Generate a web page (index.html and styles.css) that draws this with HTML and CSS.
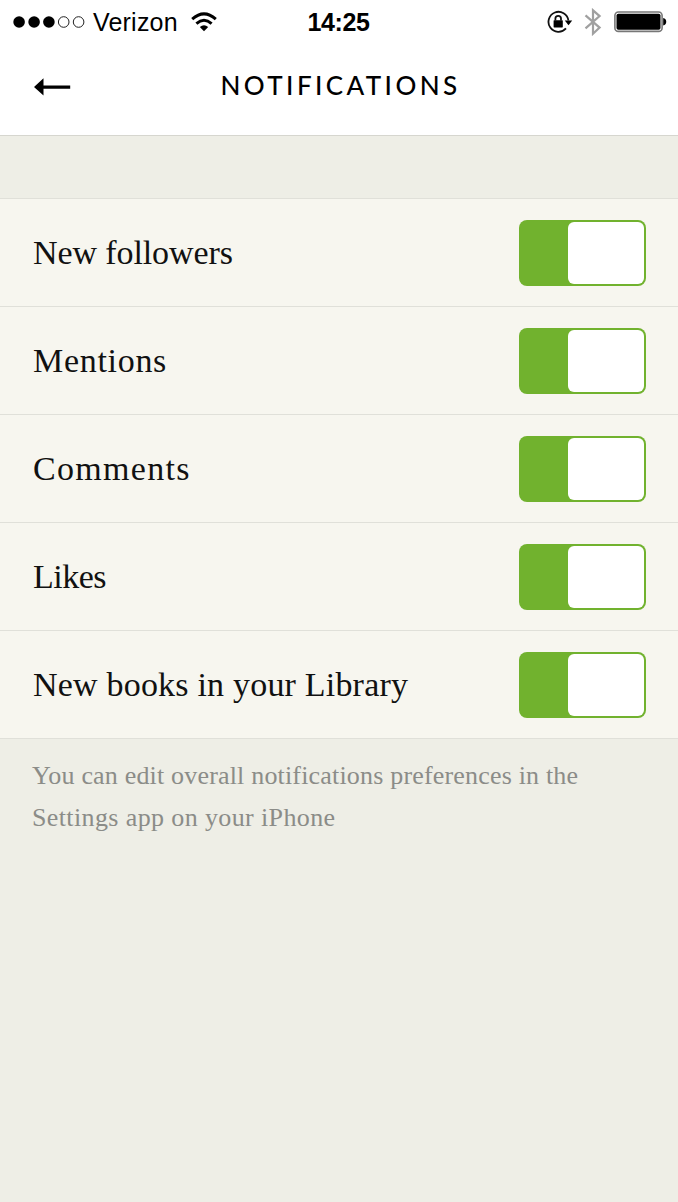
FILE: index.html
```html
<!DOCTYPE html>
<html lang="en">
<head>
    <meta charset="UTF-8">
    <meta name="viewport" content="width=device-width, initial-scale=1.0">
    <title>Notifications</title>
    <link rel="stylesheet" href="styles.css">
</head>
<body>
    <!-- Status bar -->
    <div class="status-bar">
        <div class="status-left">
            <svg class="signal" width="72" height="14" viewBox="0 0 72 14">
                <circle cx="6.1" cy="7" r="5.8" />
                <circle cx="21.1" cy="7" r="5.8" />
                <circle cx="35.9" cy="7" r="5.8" />
                <circle class="empty" cx="50.7" cy="7" r="5.3" />
                <circle class="empty" cx="65.6" cy="7" r="5.3" />
            </svg>
            <span class="carrier">Verizon</span>
            <svg class="wifi" width="26" height="20" viewBox="0 0 26 20">
                <path class="arc" d="M1.2 7.2 Q13 -3.4 24.8 7.2" />
                <path class="arc" d="M5.4 11.6 Q13 5 20.6 11.6" />
                <path d="M8.8 14.9 Q13 11.6 17.2 14.9 L13 19.2 Z" />
            </svg>
        </div>
        <span class="clock">14:25</span>
        <div class="status-right">
            <svg class="lock" width="26" height="24" viewBox="0 0 26 24">
                <path class="ring" d="M21.4 10.5 A10 10 0 1 0 19 18.4" />
                <path d="M17.8 10.5 H25.2 L21.5 15.2 Z" />
                <rect x="6.6" y="10.2" width="9.2" height="7.2" rx="0.6" />
                <path class="shackle" d="M8.4 10.5 V8.6 A2.8 2.8 0 0 1 14 8.6 V10.5" />
            </svg>
            <svg class="bluetooth" width="18" height="28" viewBox="0 0 18 28">
                <path d="M1.5 7.4 L15.6 19.6 L9 25.7 V2.3 L15.6 8.1 L1.5 20.4" />
            </svg>
            <svg class="battery" width="53" height="22" viewBox="0 0 53 22">
                <rect class="case" x="0.9" y="1" width="47.2" height="19.4" rx="3.5" />
                <rect x="2.5" y="2.7" width="44" height="16" rx="1.8" />
                <path d="M49.2 7 Q52.2 7.6 52.2 10.7 Q52.2 13.8 49.2 14.4 Z" />
            </svg>
        </div>
    </div>

    <!-- Navigation -->
    <header class="navbar">
        <svg class="back" width="38" height="20" viewBox="0 0 38 20">
            <path d="M0 11 L9.5 2.3 V9.4 H36.2 V12.7 H9.5 V19.6 Z" />
        </svg>
        <h1 class="title">NOTIFICATIONS</h1>
    </header>

    <!-- Settings -->
    <ul class="settings">
        <li class="row">
            <span class="label followers">New followers</span>
            <span class="toggle"><span class="knob"></span></span>
        </li>
        <li class="row">
            <span class="label mentions">Mentions</span>
            <span class="toggle"><span class="knob"></span></span>
        </li>
        <li class="row">
            <span class="label comments">Comments</span>
            <span class="toggle"><span class="knob"></span></span>
        </li>
        <li class="row">
            <span class="label likes">Likes</span>
            <span class="toggle"><span class="knob"></span></span>
        </li>
        <li class="row">
            <span class="label books">New books in your Library</span>
            <span class="toggle"><span class="knob"></span></span>
        </li>
    </ul>

    <p class="hint">You can edit overall notifications preferences in the<br><span class="hint-end">Settings app on your iPhone</span></p>
</body>
</html>
```
FILE: styles.css
```css
* {
    box-sizing: border-box;
}
body {
    margin: 0;
    min-height: 100vh;
    font-family: "Liberation Serif", serif;
    background-color: #eeeee6;
    color: #111;
}

/* Status bar */
.status-bar {
    display: grid;
    grid-template-columns: 1fr auto 1fr;
    align-items: center;
    height: 43px;
    padding: 0 11px 0 13px;
    background-color: #fff;
    color: #000;
    font-family: "Liberation Sans", sans-serif;
    font-size: 25px;
}
.status-left, .status-right {
    display: flex;
    align-items: center;
}
.status-right {
    justify-content: flex-end;
}
.signal .empty {
    fill: none;
    stroke: #222;
    stroke-width: 1;
}
.carrier {
    margin-left: 8px;
    padding-top: 1px;
    letter-spacing: 0.2px;
}
.wifi {
    margin-left: 13px;
}
.wifi .arc {
    fill: none;
    stroke: #000;
    stroke-width: 3;
}
.clock {
    padding: 1px 3px 0 0;
    font-weight: bold;
    letter-spacing: -0.4px;
}
.lock .ring, .lock .shackle {
    fill: none;
    stroke: #111;
    stroke-width: 1.8;
}
.bluetooth {
    margin-left: 11px;
    fill: none;
    stroke: #a0a0a0;
    stroke-width: 2.2;
}
.battery {
    margin-left: 12px;
}
.battery .case {
    fill: none;
    stroke: #777;
    stroke-width: 1.6;
}

/* Navigation */
.navbar {
    display: grid;
    grid-template-columns: 1fr auto 1fr;
    align-items: center;
    height: 93px;
    padding: 0 34px 6px;
    background-color: #fff;
    border-bottom: 1px solid #d6d6cf;
}
.title {
    margin: 0;
    padding: 0 0 2px 3px;
    color: #000;
    font-family: Lato, sans-serif;
    font-size: 26px;
    font-weight: 500;
    letter-spacing: 3.4px;
}

/* Settings */
.settings {
    margin: 62px 0 0;
    padding: 0;
    list-style: none;
    border-top: 1px solid #e0e0d9;
    background-color: #f7f6ef;
}
.row {
    display: flex;
    align-items: center;
    justify-content: space-between;
    height: 108px;
    padding: 1px 32px 0 33px;
    border-bottom: 1px solid #e0e0d9;
}
.label {
    font-size: 34px;
}
.followers {
    letter-spacing: -0.1px;
}
.mentions {
    letter-spacing: 0.7px;
}
.comments {
    letter-spacing: 1.3px;
}
.likes {
    letter-spacing: -0.5px;
}
.books {
    letter-spacing: 0.2px;
}
.toggle {
    display: flex;
    justify-content: flex-end;
    width: 127px;
    height: 66px;
    padding: 2px;
    border-radius: 8px;
    background-color: #71b22e;
}
.knob {
    width: 76px;
    border-radius: 6px;
    background-color: #fff;
}

/* Footer text */
.hint {
    margin: 0;
    padding: 16px 32px;
    color: #8b8c88;
    font-size: 26px;
    line-height: 42px;
    letter-spacing: 0.18px;
}
.hint-end {
    letter-spacing: 0.38px;
}
```
